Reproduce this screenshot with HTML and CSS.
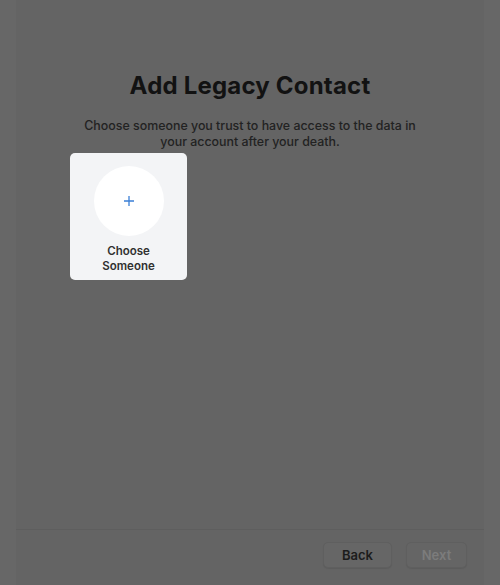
FILE: index.html
```html
<!DOCTYPE html>
<html>
<head>
<meta charset="utf-8">
<link rel="stylesheet" href="styles.css">
</head>
<body>
<div class="panel">
  <main class="content">
    <h1 class="title">Add Legacy Contact</h1>
    <p class="subtitle">Choose someone you trust to have access to the data in<br>your account after your death.</p>
    <div class="cards">
      <div class="card">
        <div class="avatar">
          <svg width="12" height="12" viewBox="0 0 12 12"><path d="M6 1v10M1 6h10" stroke="#3a7fd6" stroke-width="1.3" fill="none"/></svg>
        </div>
        <div class="card-label">Choose<br>Someone</div>
      </div>
    </div>
  </main>
  <footer class="footer">
    <button class="btn">Back</button>
    <button class="btn btn-disabled">Next</button>
  </footer>
</div>
</body>
</html>
```
FILE: styles.css
```css
html, body {
  margin: 0;
  padding: 0;
  height: 100%;
}
body {
  background: #676767;
  font-family: Inter, "Liberation Sans", Arial, sans-serif;
  padding: 0 16px;
  box-sizing: border-box;
}
.panel {
  background: #646464;
  height: 585px;
  display: flex;
  flex-direction: column;
}
.content {
  flex: 1;
  display: flex;
  flex-direction: column;
  align-items: center;
  padding-top: 70px;
}
.title {
  margin: 0;
  font-size: 24px;
  font-weight: 700;
  color: #121212;
  letter-spacing: 0.2px;
  line-height: 32px;
}
.subtitle {
  margin: 16px 0 0;
  font-size: 12.4px;
  line-height: 16px;
  font-weight: 500;
  color: #222222;
  text-align: center;
}
.cards {
  align-self: stretch;
  padding-left: 54px;
  margin-top: 3px;
}
.card {
  width: 117px;
  height: 127px;
  background: #f3f4f6;
  border-radius: 5px;
  display: flex;
  flex-direction: column;
  align-items: center;
  padding-top: 13px;
  box-sizing: border-box;
}
.avatar {
  width: 70px;
  height: 70px;
  border-radius: 50%;
  background: #ffffff;
  display: flex;
  align-items: center;
  justify-content: center;
}
.card-label {
  margin-top: 8px;
  font-size: 11.5px;
  line-height: 15px;
  font-weight: 600;
  color: #303030;
  text-align: center;
}
.footer {
  border-top: 1px solid #5e5e5e;
  height: 56px;
  display: flex;
  justify-content: flex-end;
  align-items: flex-start;
  gap: 14px;
  padding: 12px 17px 0 0;
  box-sizing: border-box;
}
.btn {
  width: 69px;
  height: 26px;
  border: 1px solid #5f5f5f;
  border-radius: 5px;
  background: #666666;
  font-family: inherit;
  font-size: 13px;
  font-weight: 600;
  color: #1c1c1c;
  box-shadow: 0 1px 1px rgba(0,0,0,0.08);
}
.btn-disabled {
  width: 61px;
  color: #7c7c7c;
  background: #656565;
}
```
